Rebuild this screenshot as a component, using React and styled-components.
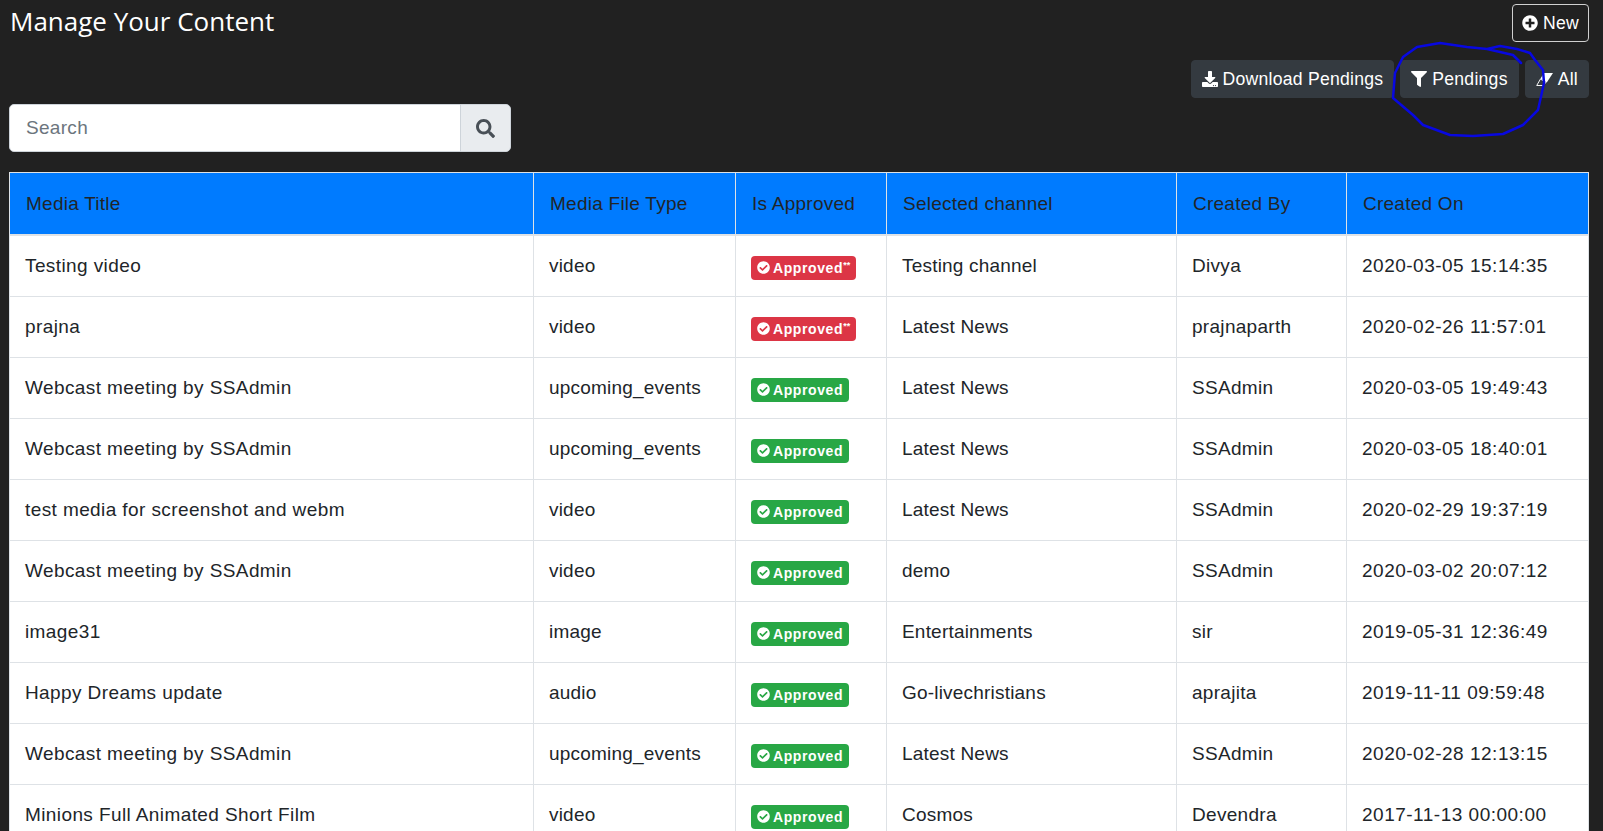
import React from 'react';
import styled, { createGlobalStyle } from 'styled-components';
import { FaPlusCircle, FaDownload, FaFilter, FaSearch, FaCheckCircle } from 'react-icons/fa';

const GlobalStyle = createGlobalStyle`
  html, body {
    margin: 0;
    height: 100%;
    overflow: hidden;
    background: #212121;
  }
`;

const Page = styled.div`
  position: relative;
  height: 831px;
  overflow: hidden;
  padding: 0 14px 0 9px;
  background: #212121;
  font-family: 'Liberation Sans', Arial, sans-serif;
  font-size: 19px;
  letter-spacing: 0.3px;
  color: #212529;
`;

const TopBar = styled.div`
  display: flex;
  justify-content: space-between;
  align-items: flex-start;
  padding-top: 4px;
`;

const Title = styled.h1`
  margin: 0 0 0 1px;
  font-family: 'Open Sans', sans-serif;
  font-size: 26px;
  font-weight: 400;
  line-height: 34px;
  letter-spacing: 0;
  color: #fff;
`;

const Button = styled.button`
  display: inline-flex;
  align-items: center;
  gap: 5px;
  height: 38px;
  padding: 0 ${(p) => (p.$outline ? '9px' : '10px')};
  border: 1px solid ${(p) => (p.$outline ? '#d0d0d0' : '#343a40')};
  border-radius: 4px;
  background: ${(p) => (p.$outline ? 'transparent' : '#343a40')};
  color: #fff;
  font-family: inherit;
  font-size: 17.6px;
  letter-spacing: 0.25px;
  svg {
    font-size: 16px;
  }
`;

const ActionRow = styled.div`
  display: flex;
  justify-content: flex-end;
  gap: 6px;
  margin-top: 18px;
`;

const SearchGroup = styled.div`
  display: flex;
  width: 502px;
  height: 48px;
  margin-top: 6px;
`;

const SearchInput = styled.div`
  flex: 1;
  display: flex;
  align-items: center;
  padding-left: 16px;
  background: #fff;
  border: 1px solid #ced4da;
  border-radius: 5px 0 0 5px;
  color: #6c757d;
  font-size: 19px;
`;

const SearchAddon = styled.div`
  width: 49px;
  display: flex;
  align-items: center;
  justify-content: center;
  margin-left: -1px;
  background: #e9ecef;
  border: 1px solid #ced4da;
  border-radius: 0 5px 5px 0;
  color: #495057;
  font-size: 19px;
`;

const Table = styled.table`
  width: 1579px;
  margin-top: 20px;
  table-layout: fixed;
  border-collapse: collapse;
  background: #fff;
`;

const HeadCell = styled.th`
  height: 61px;
  padding: 0 0 0 16px;
  background: #007bff;
  border: 1px solid #dee2e6;
  border-bottom-width: 2px;
  color: #212529;
  font-weight: 400;
  letter-spacing: 0.25px;
  text-align: left;
`;

const Cell = styled.td`
  box-sizing: border-box;
  height: 61px;
  padding: 1px 0 0 15px;
  border: 1px solid #dee2e6;
  letter-spacing: ${(p) => p.$spacing || '0.3px'};
`;

const Badge = styled.span`
  display: inline-flex;
  align-items: center;
  gap: 3px;
  height: 24px;
  margin-top: 3px;
  padding: 0 6px;
  border-radius: 4px;
  background: ${(p) => (p.$pending ? '#dc3545' : '#28a745')};
  color: #fff;
  font-size: 14px;
  font-weight: 700;
  letter-spacing: 0.6px;
  vertical-align: middle;
  svg {
    font-size: 13px;
  }
  sup {
    font-size: 9px;
    line-height: 0;
    letter-spacing: 0;
    vertical-align: 5px;
  }
`;

const Scribble = styled.svg`
  position: absolute;
  left: 1385px;
  top: 36px;
  width: 170px;
  height: 110px;
  pointer-events: none;
`;

const EraserIcon = () => (
  <svg width="17" height="13" viewBox="0 0 19 13" preserveAspectRatio="none">
    <polygon points="9,0 19,0 12,9.5 5,5.5" fill="#fff" />
    <polygon points="5,6 11,9.5 8,12.5 0.8,12.5" fill="none" stroke="#fff" strokeWidth="1" />
  </svg>
);

const columns = [
  { label: 'Media Title', width: 524 },
  { label: 'Media File Type', width: 202 },
  { label: 'Is Approved', width: 151 },
  { label: 'Selected channel', width: 290 },
  { label: 'Created By', width: 170 },
  { label: 'Created On', width: 242 },
];

const rows = [
  ['Testing video', 'video', true, 'Testing channel', 'Divya', '2020-03-05 15:14:35'],
  ['prajna', 'video', true, 'Latest News', 'prajnaparth', '2020-02-26 11:57:01'],
  ['Webcast meeting by SSAdmin', 'upcoming_events', false, 'Latest News', 'SSAdmin', '2020-03-05 19:49:43'],
  ['Webcast meeting by SSAdmin', 'upcoming_events', false, 'Latest News', 'SSAdmin', '2020-03-05 18:40:01'],
  ['test media for screenshot and webm', 'video', false, 'Latest News', 'SSAdmin', '2020-02-29 19:37:19'],
  ['Webcast meeting by SSAdmin', 'video', false, 'demo', 'SSAdmin', '2020-03-02 20:07:12'],
  ['image31', 'image', false, 'Entertainments', 'sir', '2019-05-31 12:36:49'],
  ['Happy Dreams update', 'audio', false, 'Go-livechristians', 'aprajita', '2019-11-11 09:59:48'],
  ['Webcast meeting by SSAdmin', 'upcoming_events', false, 'Latest News', 'SSAdmin', '2020-02-28 12:13:15'],
  ['Minions Full Animated Short Film', 'video', false, 'Cosmos', 'Devendra', '2017-11-13 00:00:00'],
];

const App = () => (
  <Page>
    <GlobalStyle />
    <TopBar>
      <Title>Manage Your Content</Title>
      <Button $outline>
        <FaPlusCircle />
        New
      </Button>
    </TopBar>
    <ActionRow>
      <Button>
        <FaDownload />
        Download Pendings
      </Button>
      <Button>
        <FaFilter />
        Pendings
      </Button>
      <Button>
        <EraserIcon />
        All
      </Button>
    </ActionRow>
    <SearchGroup>
      <SearchInput>Search</SearchInput>
      <SearchAddon>
        <FaSearch />
      </SearchAddon>
    </SearchGroup>
    <Table>
      <colgroup>
        {columns.map((c) => (
          <col key={c.label} width={c.width} />
        ))}
      </colgroup>
      <thead>
        <tr>
          {columns.map((c) => (
            <HeadCell key={c.label}>{c.label}</HeadCell>
          ))}
        </tr>
      </thead>
      <tbody>
        {rows.map((r, i) => (
          <tr key={i}>
            <Cell $spacing="0.4px">{r[0]}</Cell>
            <Cell $spacing="0.2px">{r[1]}</Cell>
            <Cell>
              <Badge $pending={r[2]}>
                <FaCheckCircle />
                <span>
                  Approved
                  {r[2] && <sup>**</sup>}
                </span>
              </Badge>
            </Cell>
            <Cell $spacing="0.2px">{r[3]}</Cell>
            <Cell>{r[4]}</Cell>
            <Cell $spacing="0.5px">{r[5]}</Cell>
          </tr>
        ))}
      </tbody>
    </Table>
    <Scribble viewBox="1385 36 170 110">
      <polyline
        points="1521,63 1513,55 1500,52 1487,49 1467,47 1440,43 1417,47 1403,57 1395,73 1393,98 1413,115 1423,125 1450,135 1473,136 1503,134 1523,125 1538,110 1544,83 1543,70 1535,60 1530,53 1517,49 1500,46 1487,49"
        fill="none"
        stroke="#0808e0"
        strokeWidth="2.5"
        strokeLinejoin="round"
        strokeLinecap="round"
      />
    </Scribble>
  </Page>
);

export default App;
